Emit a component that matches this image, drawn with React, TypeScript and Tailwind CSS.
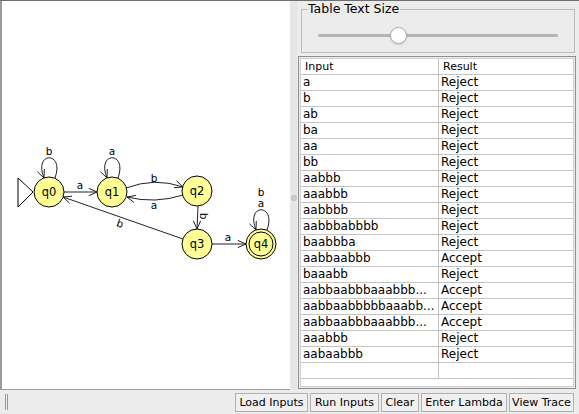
import React from "react";

type Row = { input: string; result: string };

const ROWS: Row[] = [
  { input: "a", result: "Reject" },
  { input: "b", result: "Reject" },
  { input: "ab", result: "Reject" },
  { input: "ba", result: "Reject" },
  { input: "aa", result: "Reject" },
  { input: "bb", result: "Reject" },
  { input: "aabbb", result: "Reject" },
  { input: "aaabbb", result: "Reject" },
  { input: "aabbbb", result: "Reject" },
  { input: "aabbbabbbb", result: "Reject" },
  { input: "baabbba", result: "Reject" },
  { input: "aabbaabbb", result: "Accept" },
  { input: "baaabb", result: "Reject" },
  { input: "aabbaabbbaaabbb...", result: "Accept" },
  { input: "aabbaabbbbbaaabb...", result: "Accept" },
  { input: "aabbaabbbaaabbb...", result: "Accept" },
  { input: "aaabbb", result: "Reject" },
  { input: "aabaabbb", result: "Reject" },
  { input: "", result: "" },
];

const BUTTONS = [
  { label: "Load Inputs", w: "w-[73px]" },
  { label: "Run Inputs", w: "w-[69px]" },
  { label: "Clear", w: "w-[38px]" },
  { label: "Enter Lambda", w: "w-[86px]" },
  { label: "View Trace", w: "w-[65px]" },
];

// open "V" arrowhead like JFLAP draws
function arrow(x: number, y: number, ang: number) {
  const len = 9;
  const spread = (24 * Math.PI) / 180;
  const a1 = ang + Math.PI - spread;
  const a2 = ang + Math.PI + spread;
  return `M ${x + len * Math.cos(a1)} ${y + len * Math.sin(a1)} L ${x} ${y} L ${x + len * Math.cos(a2)} ${y + len * Math.sin(a2)}`;
}

function State({ x, y, label, final }: { x: number; y: number; label: string; final?: boolean }) {
  return (
    <g>
      <circle cx={x} cy={y} r={15} fill="#ffff96" stroke="#000" strokeWidth={1} />
      {final && <circle cx={x} cy={y} r={12} fill="none" stroke="#000" strokeWidth={1} />}
      <text x={x} y={y + 4} textAnchor="middle" fontSize={11.5} fill="#000">
        {label}
      </text>
    </g>
  );
}

function Loop({ x, y, labels }: { x: number; y: number; labels: string[] }) {
  const top = y - 14;
  const sx = x + 6;
  const ex = x - 5;
  return (
    <g>
      <path d={`M ${sx} ${top} C ${x + 16} ${top - 27}, ${x - 16} ${top - 27}, ${ex} ${top}`} fill="none" stroke="#222" />
      <path d={arrow(ex, top, Math.atan2(27, 11))} fill="none" stroke="#222" />
      {labels.map((l, i) => (
        <text key={l} x={x} y={top - 23 - (labels.length - 1 - i) * 11} textAnchor="middle" fontSize={10.5} fill="#000">
          {l}
        </text>
      ))}
    </g>
  );
}

function Diagram() {
  return (
    <svg width={288} height={389} className="block">
      {/* start marker */}
      <path d="M 16 177 L 31 191 L 16 206 Z" fill="#fff" stroke="#000" />

      {/* q0 -> q1 */}
      <path d="M 61 191 L 95 191" stroke="#222" />
      <path d={arrow(95, 191, 0)} fill="none" stroke="#222" />
      <text x={78} y={188} textAnchor="middle" fontSize={10.5}>a</text>

      {/* q1 -> q2 */}
      <path d="M 124 187 Q 153 176 181 186" fill="none" stroke="#222" />
      <path d={arrow(181, 186, Math.atan2(10, 28))} fill="none" stroke="#222" />
      <text x={152} y={181} textAnchor="middle" fontSize={10.5}>b</text>

      {/* q2 -> q1 */}
      <path d="M 181 194 Q 153 203 125 196" fill="none" stroke="#222" />
      <path d={arrow(125, 196, Math.atan2(-7, -28))} fill="none" stroke="#222" />
      <text x={152} y={208} textAnchor="middle" fontSize={10.5}>a</text>

      {/* q2 -> q3 */}
      <path d="M 196 205 L 195 228" stroke="#222" />
      <path d={arrow(195, 228, Math.PI / 2)} fill="none" stroke="#222" />
      <text x={0} y={0} textAnchor="middle" fontSize={10.5} transform="translate(198 215) rotate(90)">b</text>

      {/* q3 -> q0 */}
      <path d="M 181 238 L 61 196" stroke="#222" />
      <path d={arrow(61, 196, Math.atan2(-42, -120))} fill="none" stroke="#222" />
      <text x={0} y={0} textAnchor="middle" fontSize={10.5} transform="translate(117 226) rotate(19)">b</text>

      {/* q3 -> q4 */}
      <path d="M 210 243 L 244 243" stroke="#222" />
      <path d={arrow(244, 243, 0)} fill="none" stroke="#222" />
      <text x={226} y={240} textAnchor="middle" fontSize={10.5}>a</text>

      <Loop x={47} y={191} labels={["b"]} />
      <Loop x={110} y={191} labels={["a"]} />
      <Loop x={259} y={243} labels={["b", "a"]} />

      <State x={47} y={191} label="q0" />
      <State x={110} y={191} label="q1" />
      <State x={195} y={190} label="q2" />
      <State x={195} y={243} label="q3" />
      <State x={259} y={243} label="q4" final />
    </svg>
  );
}

export default function App() {
  return (
    <div className="w-[579px] h-[414px] overflow-hidden bg-[#ececec] border-t border-[#6e6e6e] flex flex-col font-['DejaVu_Sans',sans-serif] text-black">
      <div className="flex h-[389px]">
        {/* canvas */}
        <div className="w-[290px] h-full bg-white border-l-2 border-b border-[#9b9b9b]">
          <Diagram />
        </div>

        {/* split divider */}
        <div className="w-[7px] h-full bg-[#e6e6e6] flex items-center justify-center">
          <div className="w-[6px] h-[6px] rounded-full bg-[#cfcfcf] border border-[#bdbdbd] mt-[4px]" />
        </div>

        {/* right panel */}
        <div className="flex-1 flex flex-col">
          <div className="relative mt-[8px] ml-[4px] mr-[4px] h-[44px] border border-[#bcbcbc]">
            <span className="absolute -top-[9px] left-[5px] bg-[#ececec] px-[1px] text-[12.5px] leading-[16px]">
              Table Text Size
            </span>
            <div className="relative mt-[24px] ml-[16px] mr-[16px] h-[3px] rounded-full bg-[#b5b5b5]">
              <div className="absolute -top-[7px] left-[72px] w-[17px] h-[17px] rounded-full bg-white border border-[#a8a8a8] shadow-sm" />
            </div>
          </div>

          <div className="mt-[3px] ml-[1px] mr-[3px] h-[333px] border border-[#8f8f8f] p-[1px]">
            <div className="h-full bg-white border border-[#cfcfcf] text-[12px]">
              <div className="flex h-[16px] border-b border-[#c4c4c4] text-[11px] leading-[15px]">
                <div className="w-[138px] pl-[4px] border-r border-[#c4c4c4]">Input</div>
                <div className="flex-1 pl-[4px]">Result</div>
              </div>
              {ROWS.map((r, i) => (
                <div key={i} className="flex h-[16px] border-b border-[#c4c4c4] leading-[14px]">
                  <div className="w-[138px] pl-[2px] border-r border-[#c4c4c4] whitespace-nowrap overflow-hidden">{r.input}</div>
                  <div className="flex-1 pl-[2px]">{r.result}</div>
                </div>
              ))}
            </div>
          </div>
        </div>
      </div>

      {/* bottom bar */}
      <div className="flex-1 flex items-center">
        <div className="ml-[5px] w-[3px] h-[16px] border-l border-r border-[#9a9a9a]" />
        <div className="ml-auto mr-[5px] flex gap-[2px]">
          {BUTTONS.map((b) => (
            <button
              key={b.label}
              className={`${b.w} h-[19px] border border-[#b0b0b0] bg-[#f0f0f0] text-[11px] leading-[17px] text-black text-center whitespace-nowrap`}
            >
              {b.label}
            </button>
          ))}
        </div>
      </div>
    </div>
  );
}
